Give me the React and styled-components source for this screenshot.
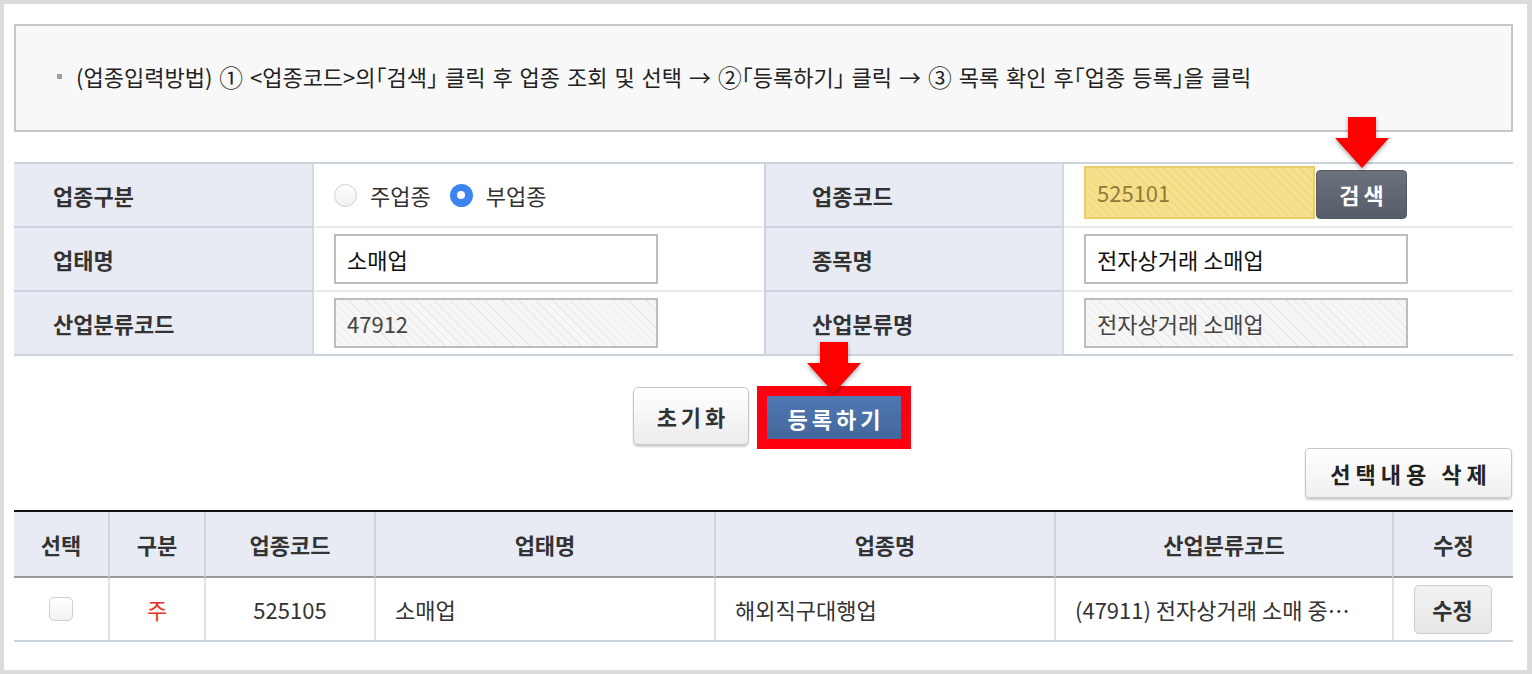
import React from "react";
import styled, { createGlobalStyle, css } from "styled-components";

const GlobalStyle = createGlobalStyle`
  html, body { margin: 0; padding: 0; background: #dcdcdc; }
  body { font-family: "Noto Sans CJK KR", "Noto Sans", sans-serif; color: #222; }
  * { box-sizing: border-box; }
`;

const FONT = `"Noto Sans CJK KR", "Noto Sans", sans-serif`;

const Page = styled.div`
  margin: 4px 5px 4px 4px;
  background: #fff;
  padding: 20px 14px 28px 10px;
  height: 666px;
  font-family: ${FONT};
`;

const Notice = styled.div`
  height: 108px;
  background: #f8f8f8;
  border: 2px solid #c6c6c6;
  display: flex;
  align-items: center;
  padding-left: 41px;
  padding-bottom: 4px;
  font-size: 22px;
  color: #222;
  white-space: pre;
  word-spacing: 2px;
`;

const Bullet = styled.span`
  width: 5px;
  height: 5px;
  background: #a0a0a0;
  margin-right: 14px;
  flex: none;
`;

const Bracket = styled.span`
  font-feature-settings: "halt";
`;

const Circled = styled.span`
  font-size: 1.08em;
`;

const FormTable = styled.div`
  margin-top: 30px;
  display: grid;
  grid-template-columns: 300px 450px 300px 1fr;
  border-top: 2px solid #ccd3dc;
`;

const LabelCell = styled.div`
  height: 64px;
  background: #e8ebf3;
  display: flex;
  align-items: center;
  padding-left: 39px;
  font-size: 22px;
  font-weight: 700;
  color: #333;
  border-right: 2px solid #d4dae2;
  border-bottom: 2px solid #ccd3dc;
  ${(p) => p.$divided && css`border-left: 2px solid #ccd3dc; padding-left: 46px;`}
`;

const ValueCell = styled.div`
  height: 64px;
  display: flex;
  align-items: center;
  padding-left: 20px;
  border-bottom: 2px solid ${(p) => (p.$last ? "#ccd3dc" : "#ebebeb")};
`;

const RadioOption = styled.label`
  display: flex;
  align-items: center;
  font-size: 22px;
  color: #333;
  margin-right: 19px;
  gap: 13px;
`;

const RadioDot = styled.span`
  width: 23px;
  height: 23px;
  border-radius: 50%;
  flex: none;
  ${(p) =>
    p.$checked
      ? css`
          background: #3c85f0;
          display: flex;
          align-items: center;
          justify-content: center;
          &::after {
            content: "";
            width: 8px;
            height: 8px;
            border-radius: 50%;
            background: #fff;
          }
        `
      : css`
          border: 1px solid #d0d0d0;
          background: linear-gradient(#fff, #f0f0f0);
        `}
`;

const hatch = css`
  background-image: repeating-linear-gradient(
    45deg,
    transparent 0px,
    transparent 5px,
    rgba(0, 0, 0, 0.05) 5px,
    rgba(0, 0, 0, 0.05) 6px
  );
`;

const Field = styled.div`
  width: 324px;
  height: 50px;
  border: 2px solid #bdbdbd;
  display: flex;
  align-items: center;
  padding-left: 11px;
  font-size: 22px;
  color: ${(p) => (p.$readonly ? "#444" : "#111")};
  background-color: ${(p) => (p.$readonly ? "#f6f6f6" : "#fff")};
  ${(p) => p.$readonly && hatch}
`;

const SearchGroup = styled.div`
  display: flex;
  align-items: flex-end;
  margin-top: -6px;
`;

const CodeField = styled.div`
  width: 231px;
  height: 53px;
  border: 2px solid #e8cf6c;
  background-color: #f8e08a;
  ${hatch}
  display: flex;
  align-items: center;
  padding-left: 11px;
  font-size: 22px;
  color: #8f7c3a;
`;

const SearchButton = styled.button`
  position: relative;
  width: 91px;
  height: 49px;
  margin-left: 1px;
  border: 1px solid #545b64;
  border-radius: 4px;
  background: linear-gradient(#6b727e, #565d68);
  color: #fff;
  font-family: ${FONT};
  font-size: 22px;
  font-weight: 700;
  letter-spacing: 4px;
  padding: 0 0 0 4px;
`;

const ArrowMark = styled.svg`
  position: absolute;
  left: 50%;
  transform: translateX(-50%);
  bottom: calc(100% - ${(p) => p.$overlap}px);
  filter: drop-shadow(0 2px 2px rgba(0, 0, 0, 0.35));
  pointer-events: none;
`;

const Arrow = ({ overlap }) => (
  <ArrowMark $overlap={overlap} width="56" height="53" viewBox="0 0 56 53">
    <path d="M14 1 H42 V22 H55 L28 52 L1 22 H14 Z" fill="#ff0000" />
  </ArrowMark>
);

const ActionBar = styled.div`
  margin-top: 30px;
  height: 62px;
  display: flex;
  justify-content: center;
  align-items: flex-start;
  padding-left: 17px;
  gap: 8px;
`;

const ResetButton = styled.button`
  margin-top: 1px;
  width: 116px;
  height: 58px;
  border: 1px solid #c8c8c8;
  border-radius: 5px;
  background: linear-gradient(#ffffff, #ececec);
  box-shadow: 0 2px 2px rgba(0, 0, 0, 0.2);
  font-family: ${FONT};
  font-size: 22px;
  font-weight: 700;
  color: #333;
  letter-spacing: 4px;
  padding: 0 0 0 4px;
`;

const Highlight = styled.div`
  position: relative;
  border: 10px solid #ff0010;
  width: 154px;
  height: 63px;
`;

const RegisterButton = styled.button`
  width: 100%;
  height: 100%;
  border: none;
  background: linear-gradient(#5078b4, #44679c);
  color: #fff;
  font-family: ${FONT};
  font-size: 22px;
  font-weight: 700;
  letter-spacing: 4px;
  padding: 0 0 0 4px;
  margin: 0;
`;

const ToolBar = styled.div`
  display: flex;
  justify-content: flex-end;
  margin-right: 1px;
`;

const DeleteButton = styled.button`
  width: 207px;
  height: 50px;
  border: 1px solid #c8c8c8;
  border-radius: 4px;
  background: linear-gradient(#ffffff, #efefef);
  box-shadow: 0 2px 2px rgba(0, 0, 0, 0.2);
  font-family: ${FONT};
  font-size: 22px;
  font-weight: 700;
  color: #222;
  letter-spacing: 5px;
  padding: 0 0 0 5px;
`;

const ListTable = styled.div`
  margin-top: 12px;
  display: grid;
  grid-template-columns: 94px 96px 170px 340px 340px 338px 1fr;
  border-top: 2px solid #111;
  border-bottom: 2px solid #ccd3dc;
`;

const HeadCell = styled.div`
  height: 66px;
  background: #e8ebf3;
  display: flex;
  align-items: center;
  justify-content: center;
  font-size: 22px;
  font-weight: 700;
  color: #333;
  border-bottom: 2px solid #999;
  border-left: ${(p) => (p.$first ? "none" : "2px solid #ccd3dc")};
`;

const BodyCell = styled.div`
  height: 62px;
  display: flex;
  align-items: center;
  justify-content: ${(p) => (p.$align === "left" ? "flex-start" : "center")};
  padding-left: ${(p) => (p.$align === "left" ? "19px" : "0")};
  font-size: 22px;
  color: ${(p) => p.$color || "#333"};
  border-left: ${(p) => (p.$first ? "none" : "2px solid #e2e2e2")};
  white-space: nowrap;
`;

const CheckBox = styled.span`
  width: 24px;
  height: 24px;
  border: 1px solid #cfcfcf;
  border-radius: 5px;
  background: linear-gradient(#fff, #f1f1f1);
`;

const EditButton = styled.button`
  width: 78px;
  height: 49px;
  margin-right: 2px;
  border: 1px solid #cdcdcd;
  border-radius: 5px;
  background: linear-gradient(#f2f2f2, #e6e6e6);
  font-family: ${FONT};
  font-size: 22px;
  font-weight: 700;
  color: #333;
`;

const heads = ["선택", "구분", "업종코드", "업태명", "업종명", "산업분류코드", "수정"];

export default function App() {
  return (
    <>
      <GlobalStyle />
      <Page>
        <Notice>
          <Bullet />
          {"(업종입력방법) "}
          <Circled>①</Circled>
          {" <업종코드>의"}
          <Bracket>「</Bracket>검색<Bracket>」</Bracket>
          {" 클릭 후 업종 조회 및 선택 → "}
          <Circled>②</Circled>
          <Bracket>「</Bracket>등록하기<Bracket>」</Bracket>
          {" 클릭 → "}
          <Circled>③</Circled>
          {" 목록 확인 후"}
          <Bracket>「</Bracket>업종 등록<Bracket>」</Bracket>
          {"을 클릭"}
        </Notice>

        <FormTable>
          <LabelCell>업종구분</LabelCell>
          <ValueCell>
            <RadioOption>
              <RadioDot />
              주업종
            </RadioOption>
            <RadioOption>
              <RadioDot $checked />
              부업종
            </RadioOption>
          </ValueCell>
          <LabelCell $divided>업종코드</LabelCell>
          <ValueCell>
            <SearchGroup>
              <CodeField>525101</CodeField>
              <SearchButton>
                검색
                <Arrow overlap={-2} />
              </SearchButton>
            </SearchGroup>
          </ValueCell>

          <LabelCell>업태명</LabelCell>
          <ValueCell>
            <Field>소매업</Field>
          </ValueCell>
          <LabelCell $divided>종목명</LabelCell>
          <ValueCell>
            <Field>전자상거래 소매업</Field>
          </ValueCell>

          <LabelCell>산업분류코드</LabelCell>
          <ValueCell $last>
            <Field $readonly>47912</Field>
          </ValueCell>
          <LabelCell $divided>산업분류명</LabelCell>
          <ValueCell $last>
            <Field $readonly>전자상거래 소매업</Field>
          </ValueCell>
        </FormTable>

        <ActionBar>
          <ResetButton>초기화</ResetButton>
          <Highlight>
            <RegisterButton>등록하기</RegisterButton>
            <Arrow overlap={-2} />
          </Highlight>
        </ActionBar>

        <ToolBar>
          <DeleteButton>선택내용 삭제</DeleteButton>
        </ToolBar>

        <ListTable>
          {heads.map((h, i) => (
            <HeadCell key={h} $first={i === 0}>
              {h}
            </HeadCell>
          ))}
          <BodyCell $first>
            <CheckBox />
          </BodyCell>
          <BodyCell $color="#e8321c">주</BodyCell>
          <BodyCell>525105</BodyCell>
          <BodyCell $align="left">소매업</BodyCell>
          <BodyCell $align="left">해외직구대행업</BodyCell>
          <BodyCell $align="left">(47911) 전자상거래 소매 중…</BodyCell>
          <BodyCell>
            <EditButton>수정</EditButton>
          </BodyCell>
        </ListTable>
      </Page>
    </>
  );
}
